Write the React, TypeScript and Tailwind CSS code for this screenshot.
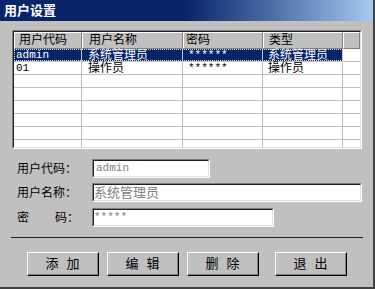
const cjk = '"Liberation Sans", "Noto Sans CJK SC", sans-serif';
const mono = '"Liberation Mono", "Noto Sans CJK SC", monospace';

type Row = { code: string; name: string; pwd: string; type: string };

const rows: Row[] = [
  { code: 'admin', name: '系统管理员', pwd: '******', type: '系统管理员' },
  { code: '01', name: '操作员', pwd: '******', type: '操作员' },
  { code: '', name: '', pwd: '', type: '' },
  { code: '', name: '', pwd: '', type: '' },
  { code: '', name: '', pwd: '', type: '' },
  { code: '', name: '', pwd: '', type: '' },
  { code: '', name: '', pwd: '', type: '' },
  { code: '', name: '', pwd: '', type: '' },
];

const Sunken = ({ className, children }: { className: string; children?: React.ReactNode }) => (
  <div className={`shrink-0 border border-t-[#808080] border-l-[#808080] border-r-white border-b-white ${className}`}>
    <div className="h-full border border-t-[#202020] border-l-[#202020] border-r-[#dfdfdf] border-b-[#dfdfdf] bg-white overflow-hidden">
      {children}
    </div>
  </div>
);

const Button = ({ label, className = '' }: { label: [string, string]; className?: string }) => (
  <button
    className={`w-[72px] h-[24px] border border-t-white border-l-white border-r-black border-b-black bg-[#c0c0c0] ${className}`}
  >
    <div className="h-full flex items-center justify-center gap-[8px] border-r border-b border-[#808080] text-[13px] text-black">
      <span>{label[0]}</span>
      <span>{label[1]}</span>
    </div>
  </button>
);

const App = () => {
  return (
    <div
      className="w-[375px] h-[289px] bg-[#c0c0c0] border-r-2 border-b-2 border-r-[#404040] border-b-[#404040] flex flex-col overflow-hidden"
      style={{ fontFamily: cjk }}
    >
      {/* title */}
      <div className="h-[21px] shrink-0 bg-gradient-to-r from-[#0a246a] via-[#0a246a] to-[#a6caf0] flex items-center pl-[4px] text-white font-bold text-[13px] leading-none">
        用户设置
      </div>

      {/* grid */}
      <Sunken className="ml-[12px] mt-[9px] w-[350px] h-[119px]">
        <div className="flex h-[17px] bg-[#c0c0c0] text-[12px] leading-[15px] text-black">
          <div className="w-[68px] pl-[4px] border border-t-white border-l-white border-r-[#808080] border-b-[#808080]">用户代码</div>
          <div className="w-[101px] pl-[6px] border border-t-white border-l-white border-r-[#808080] border-b-[#808080]">用户名称</div>
          <div className="w-[80px] pl-[2px] border border-t-white border-l-white border-r-[#808080] border-b-[#808080]">密码</div>
          <div className="w-[80px] pl-[5px] border border-t-white border-l-white border-r-[#808080] border-b-[#808080]">类型</div>
          <div className="flex-1 border border-t-white border-l-white border-r-[#808080] border-b-[#808080]" />
        </div>
        {rows.map((r, i) => {
          const sel = i === 0;
          return (
            <div key={i} className="flex h-[13px] text-[12px] leading-[12px] border-b border-[#c0c0c0]">
              <div
                className={`flex ${sel ? 'bg-[#0a246a] text-white outline-1 outline-dotted outline-[#e0e0e0] -outline-offset-1' : 'text-black'}`}
              >
                <div className="w-[68px] pl-[2px] border-r border-[#c0c0c0] text-[11px]" style={{ fontFamily: mono }}>
                  {r.code}
                </div>
                <div className="w-[101px] pl-[6px] border-r border-[#c0c0c0]">{r.name}</div>
                <div className="w-[80px] pl-[5px] border-r border-[#c0c0c0] text-[11px]" style={{ fontFamily: mono }}>
                  {r.pwd}
                </div>
                <div className="w-[80px] pl-[5px] border-r border-[#c0c0c0]">{r.type}</div>
              </div>
              <div className="flex-1 bg-white" />
            </div>
          );
        })}
      </Sunken>

      {/* form */}
      <div className="flex flex-col gap-[5px] mt-[10px] text-[12px] text-black">
        <div className="flex items-center h-[19px]">
          <div className="w-[92px] shrink-0 pl-[17px] whitespace-nowrap">用户代码：</div>
          <Sunken className="w-[118px] h-[19px]">
            <div className="pl-[2px] text-[11px] leading-[15px] text-[#808080]" style={{ fontFamily: mono }}>admin</div>
          </Sunken>
        </div>
        <div className="flex items-center h-[19px]">
          <div className="w-[92px] shrink-0 pl-[17px] whitespace-nowrap">用户名称：</div>
          <Sunken className="w-[270px] h-[19px]">
            <div className="text-[13px] leading-[15px] text-[#808080]">系统管理员</div>
          </Sunken>
        </div>
        <div className="flex items-center h-[19px] mt-[1px]">
          <div className="w-[92px] shrink-0 pl-[17px] flex whitespace-nowrap">
            <span>密</span>
            <span className="ml-[26px]">码：</span>
          </div>
          <Sunken className="w-[182px] h-[19px]">
            <div className="text-[11px] leading-[15px] text-[#808080]" style={{ fontFamily: mono }}>*****</div>
          </Sunken>
        </div>
      </div>

      {/* separator */}
      <div className="ml-[11px] w-[352px] mt-[10px] h-px bg-[#202020] shrink-0" />

      {/* buttons */}
      <div className="flex mt-[14px] pl-[27px]">
        <Button label={['添', '加']} />
        <Button label={['编', '辑']} className="ml-[8px]" />
        <Button label={['删', '除']} className="ml-[8px]" />
        <Button label={['退', '出']} className="ml-[16px]" />
      </div>
    </div>
  );
};

export default App;
